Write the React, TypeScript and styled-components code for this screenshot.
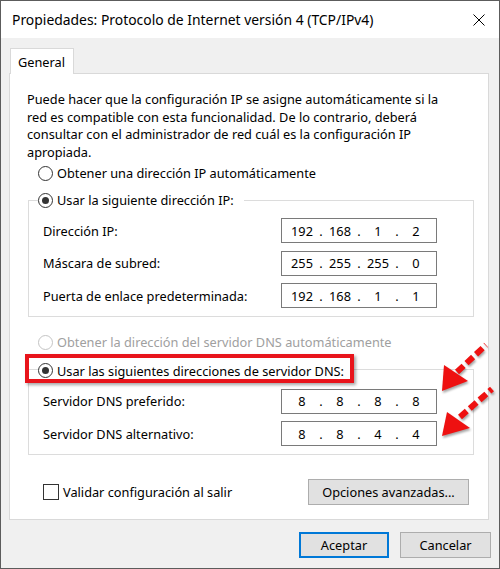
import React from "react";
import styled, { createGlobalStyle } from "styled-components";

const Global = createGlobalStyle`
  html, body { margin: 0; padding: 0; background: #fff; }
  body {
    font-family: "Noto Sans", "Segoe UI", "Liberation Sans", sans-serif;
    font-size: 12.75px;
    color: #000;
  }
  * { box-sizing: border-box; }
`;

const Window = styled.div`
  position: relative;
  width: 500px;
  height: 569px;
  border: 1px solid #5c5c5c;
  display: flex;
  flex-direction: column;
  background: #f0f0f0;
`;

const TitleBar = styled.div`
  height: 37px;
  flex: none;
  background: #fff;
  display: flex;
  align-items: center;
  justify-content: space-between;
  padding: 0 14px 0 11px;
  font-size: 13.9px;
`;

const Body = styled.div`
  flex: 1;
  display: flex;
  flex-direction: column;
  padding: 10px 10px 0 8px;
`;

const TabStrip = styled.div`
  display: flex;
  padding-left: 1px;
`;

const Tab = styled.div`
  position: relative;
  z-index: 1;
  width: 64px;
  height: 26px;
  margin-bottom: -1px;
  padding-left: 7px;
  display: flex;
  align-items: center;
  background: #fff;
  border: 1px solid #d9d9d9;
  border-bottom: none;
`;

const Panel = styled.div`
  height: 447px;
  flex: none;
  background: #fff;
  border: 1px solid #d9d9d9;
  padding: 17px 14px 0 17px;
  display: flex;
  flex-direction: column;
`;

const Intro = styled.p`
  margin: 0;
  line-height: 17.5px;
`;

const RadioLabel = styled.label<{ $disabled?: boolean; $top?: number }>`
  display: flex;
  align-items: center;
  gap: 4px;
  height: 18px;
  margin-top: ${(p) => p.$top ?? 0}px;
  margin-left: ${(p) => (p.$top !== undefined ? 11 : 0)}px;
  color: ${(p) => (p.$disabled ? "#a0a0a0" : "#000")};
  white-space: nowrap;
`;

const RadioCircle = styled.span<{ $disabled?: boolean }>`
  width: 15px;
  height: 15px;
  flex: none;
  border-radius: 50%;
  border: 1px solid ${(p) => (p.$disabled ? "#c4c4c4" : "#333")};
  background: #fff;
  display: inline-flex;
  align-items: center;
  justify-content: center;
`;

const RadioDot = styled.span`
  width: 7px;
  height: 7px;
  border-radius: 50%;
  background: #333;
`;

const GroupBox = styled.fieldset`
  margin: 9px 0 0 1px;
  min-width: 0;
  border: 1px solid #dcdcdc;
  padding: 9px 36px 8px 14px;
`;

const GroupLegend = styled.legend`
  padding: 0 10px 0 0;
  margin-left: -5px;
`;

const Highlight = styled.span`
  position: relative;
  display: inline-flex;
  &::before {
    content: "";
    position: absolute;
    top: -8px;
    left: -13px;
    right: -10px;
    bottom: -3px;
    border: 4px solid #e8141b;
    box-shadow: 2px 2px 3px rgba(0, 0, 0, 0.35);
    pointer-events: none;
  }
`;

const Rows = styled.div`
  display: flex;
  flex-direction: column;
  gap: 7.5px;
`;

const FieldRow = styled.div`
  display: flex;
  align-items: center;
  justify-content: space-between;
  height: 25px;
`;

const IpBox = styled.div`
  width: 156px;
  height: 25px;
  border: 1px solid #7a7a7a;
  background: #fff;
  padding: 0 3px;
  display: grid;
  grid-template-columns: 1fr 4px 1fr 4px 1fr 4px 1fr;
  align-items: center;
`;

const Octet = styled.span`
  text-align: center;
`;

const Dot = styled.span`
  text-align: center;
`;

const BottomRow = styled.div`
  margin-top: 24px;
  display: flex;
  align-items: center;
  justify-content: space-between;
  padding: 0 5px 0 16px;
`;

const CheckLabel = styled.label`
  display: flex;
  align-items: center;
  gap: 4px;
`;

const CheckBox = styled.span`
  width: 16px;
  height: 16px;
  border: 1px solid #333;
  background: #fff;
`;

const Button = styled.button<{ $w: number; $default?: boolean }>`
  width: ${(p) => p.$w}px;
  height: 26px;
  font: inherit;
  color: #000;
  background: #e1e1e1;
  border: ${(p) => (p.$default ? "2px solid #0078d7" : "1px solid #adadad")};
  padding: 0;
`;

const ButtonRow = styled.div`
  margin: 12px -2px 0 0;
  display: flex;
  justify-content: flex-end;
  gap: 11px;
`;

const Arrows = styled.svg`
  position: absolute;
  left: 429px;
  top: 334px;
  overflow: visible;
  filter: drop-shadow(1px 2px 1px rgba(0, 0, 0, 0.35));
`;

function Radio({ label, checked, disabled, top }: { label: string; checked?: boolean; disabled?: boolean; top?: number }) {
  return (
    <RadioLabel $disabled={disabled} $top={top}>
      <RadioCircle $disabled={disabled}>{checked && <RadioDot />}</RadioCircle>
      <span>{label}</span>
    </RadioLabel>
  );
}

function IpField({ value }: { value: string[] }) {
  return (
    <IpBox>
      {value.map((v, i) => (
        <React.Fragment key={i}>
          <Octet>{v}</Octet>
          {i < 3 && <Dot>.</Dot>}
        </React.Fragment>
      ))}
    </IpBox>
  );
}

function Field({ label, value }: { label: string; value: string[] }) {
  return (
    <FieldRow>
      <span>{label}</span>
      <IpField value={value} />
    </FieldRow>
  );
}

export default function App() {
  return (
    <>
      <Global />
      <Window>
        <TitleBar>
          <span>Propiedades: Protocolo de Internet versión 4 (TCP/IPv4)</span>
          <svg width="12" height="12" viewBox="0 0 12 12">
            <path d="M0.5 0.5 L11.5 11.5 M11.5 0.5 L0.5 11.5" stroke="#000" strokeWidth="1" />
          </svg>
        </TitleBar>
        <Body>
          <TabStrip>
            <Tab>General</Tab>
          </TabStrip>
          <Panel>
            <Intro>
              Puede hacer que la configuración IP se asigne automáticamente si la
              <br />
              red es compatible con esta funcionalidad. De lo contrario, deberá
              <br />
              consultar con el administrador de red cuál es la configuración IP
              <br />
              apropiada.
            </Intro>
            <Radio label="Obtener una dirección IP automáticamente" top={3} />
            <GroupBox>
              <GroupLegend>
                <Radio label="Usar la siguiente dirección IP:" checked />
              </GroupLegend>
              <Rows>
                <Field label="Dirección IP:" value={["192", "168", "1", "2"]} />
                <Field label="Máscara de subred:" value={["255", "255", "255", "0"]} />
                <Field label="Puerta de enlace predeterminada:" value={["192", "168", "1", "1"]} />
              </Rows>
            </GroupBox>
            <Radio label="Obtener la dirección del servidor DNS automáticamente" disabled top={16} />
            <GroupBox>
              <GroupLegend>
                <Highlight>
                  <Radio label="Usar las siguientes direcciones de servidor DNS:" checked />
                </Highlight>
              </GroupLegend>
              <Rows>
                <Field label="Servidor DNS preferido:" value={["8", "8", "8", "8"]} />
                <Field label="Servidor DNS alternativo:" value={["8", "8", "4", "4"]} />
              </Rows>
            </GroupBox>
            <BottomRow>
              <CheckLabel>
                <CheckBox />
                <span>Validar configuración al salir</span>
              </CheckLabel>
              <Button $w={161}>Opciones avanzadas...</Button>
            </BottomRow>
          </Panel>
          <ButtonRow>
            <Button $w={90} $default>Aceptar</Button>
            <Button $w={91}>Cancelar</Button>
          </ButtonRow>
        </Body>
        <Arrows width="70" height="110" viewBox="0 0 70 110">
          <line x1="27" y1="37" x2="56" y2="10" stroke="#ee1111" strokeWidth="6" strokeDasharray="9 4" />
          <polygon points="12,56 14,30 38,46" fill="#ee1111" />
          <line x1="30" y1="82" x2="62" y2="54" stroke="#ee1111" strokeWidth="6" strokeDasharray="9 4" />
          <polygon points="12,101 17,77 40,93" fill="#ee1111" />
        </Arrows>
      </Window>
    </>
  );
}
